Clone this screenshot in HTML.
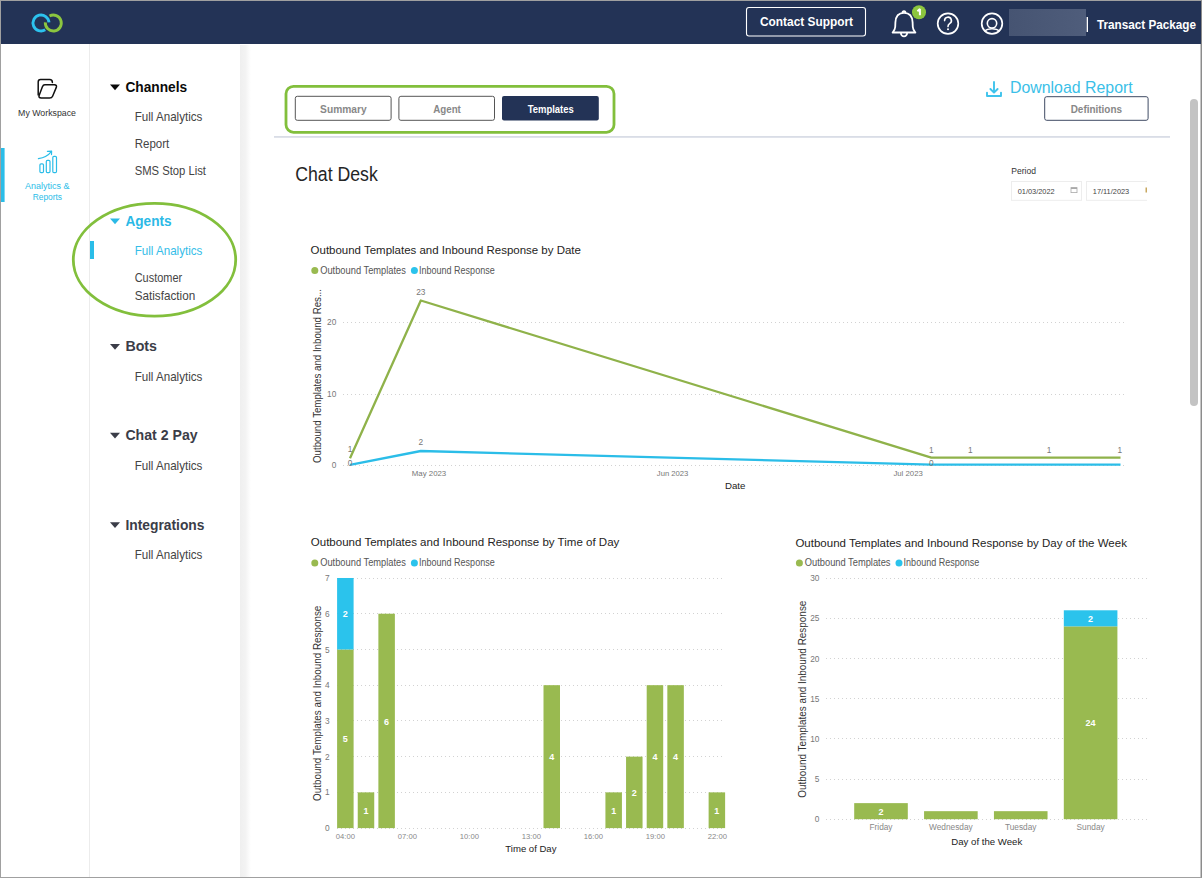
<!DOCTYPE html>
<html><head><meta charset="utf-8"><title>Chat Desk</title>
<style>
*{margin:0;padding:0}
html,body{width:1202px;height:878px;overflow:hidden;background:#fff}
body{position:relative;font-family:"Liberation Sans", sans-serif}
svg{position:absolute;left:0;top:0;display:block}
text{font-family:"Liberation Sans", sans-serif}
#frame{position:absolute;left:0;top:0;width:1202px;height:878px;box-sizing:border-box;border-left:1px solid #a0a0a0;border-top:1px solid #a0a0a0;border-bottom:1px solid #a0a0a0;border-right:1px solid #8c8c8c}
#frame2{position:absolute;left:1200px;top:44px;width:1px;height:834px;background:#c6c6c6}
</style></head>
<body>
<svg width="1202" height="878" viewBox="0 0 1202 878">
<rect x="0" y="0" width="1202" height="44" fill="#233356"/>
<path d="M48.98 22.44 A8.0 8.0 0 1 0 45.24 29.78" fill="none" stroke="#2cc2ee" stroke-width="2.9"/>
<path d="M45.32 22.44 A8.0 8.0 0 1 0 49.54 15.94" fill="none" stroke="#8cc63f" stroke-width="2.9"/>
<rect x="746.5" y="7.5" width="119" height="28.5" rx="2.5" fill="none" stroke="#fff" stroke-width="1.1"/>
<text x="760" y="26.3" font-size="13.6" fill="#fff" font-weight="bold" textLength="93" lengthAdjust="spacingAndGlyphs" >Contact Support</text>
<g fill="none" stroke="#fff" stroke-width="1.8" stroke-linejoin="round"><path d="M904 12.8 C898.2 12.8 895.6 17 895.4 22.4 L895.2 27 C895 29.8 893.4 31.4 892.6 32.5 L915.4 32.5 C914.6 31.4 913 29.8 912.8 27 L912.6 22.4 C912.4 17 909.8 12.8 904 12.8 Z"/><path d="M900.9 32.9 A3.1 3.4 0 0 0 907.1 32.9"/><path d="M902.5 12.9 C902.5 10.4 905.5 10.4 905.5 12.9"/></g>
<circle cx="919" cy="12.2" r="7" fill="#8cc63f"/>
<path d="M917.4 11.2 L919.9 9.1 L919.9 15.3" fill="none" stroke="#fff" stroke-width="2" stroke-linejoin="bevel"/>
<circle cx="948" cy="23.6" r="10.3" fill="none" stroke="#fff" stroke-width="1.7"/>
<path d="M944.6 20.6 A3.4 3.4 0 1 1 949.6 23.6 C948.4 24.3 948 25 948 26.6" fill="none" stroke="#fff" stroke-width="1.6" stroke-linecap="round"/>
<circle cx="948" cy="29.2" r="1" fill="#fff"/>
<circle cx="992" cy="23.6" r="10.3" fill="none" stroke="#fff" stroke-width="1.7"/>
<circle cx="992" cy="23.3" r="4.7" fill="none" stroke="#fff" stroke-width="1.6"/>
<path d="M984.2 31.2 C986.4 29.4 989 28.8 992 28.8 C995 28.8 997.6 29.4 999.8 31.2" fill="none" stroke="#fff" stroke-width="1.6"/>
<defs><linearGradient id="rg" x1="0" y1="0" x2="1" y2="0"><stop offset="0" stop-color="#465472"/><stop offset="1" stop-color="#4f5d7b"/></linearGradient></defs>
<rect x="1009" y="9" width="77" height="27" fill="url(#rg)"/>
<rect x="1086.6" y="17" width="1.4" height="15" fill="#fff"/>
<text x="1097" y="28.9" font-size="13.2" fill="#fff" font-weight="bold" textLength="99" lengthAdjust="spacingAndGlyphs" >Transact Package</text>
<rect x="89" y="44" width="1" height="834" fill="#ececec"/>
<g fill="none" stroke="#111" stroke-width="1.5" stroke-linejoin="round" stroke-linecap="round"><path d="M38.2 95 L38.2 82 Q38.2 79.6 40.6 79.6 L49.6 79.6 Q52.4 79.6 52.4 82.4"/><path d="M44.8 84.8 L54.4 84.8 Q57.2 84.8 56.3 87.4 L52.6 96.2 Q51.8 98 49.6 98 L41.2 98 Q38.2 98 39.2 95.2 L42.4 86.8 Q43.2 84.8 44.8 84.8 Z"/></g>
<text x="18.1" y="115.9" font-size="9.6" fill="#333" textLength="57.9" lengthAdjust="spacingAndGlyphs" >My Workspace</text>
<rect x="1" y="148" width="3.6" height="54" fill="#2bbde8"/>
<g fill="none" stroke="#2bbde8" stroke-width="1.2" stroke-linejoin="round"><rect x="39.9" y="163.9" width="3.6" height="8.8" rx="1.2"/><rect x="46.3" y="160.3" width="3.7" height="12.4" rx="1.2"/><rect x="52.8" y="156.4" width="3.7" height="16.3" rx="1.2"/><path d="M38.4 158.6 C43 158 48 156 51.5 151.4" stroke-linecap="round"/><path d="M47.4 151.3 L51.6 151.2 L51.5 154.6" stroke-linecap="round"/></g>
<text x="25" y="189.1" font-size="9.6" fill="#2bbde8" textLength="44.4" lengthAdjust="spacingAndGlyphs" >Analytics &amp;</text>
<text x="32.7" y="200" font-size="9.6" fill="#2bbde8" textLength="29.3" lengthAdjust="spacingAndGlyphs" >Reports</text>
<defs><linearGradient id="sh" x1="0" y1="0" x2="1" y2="0"><stop offset="0" stop-color="#efefef"/><stop offset="0.5" stop-color="#f3f3f3"/><stop offset="1" stop-color="#ffffff"/></linearGradient></defs>
<rect x="240" y="45" width="11" height="833" fill="url(#sh)"/>
<path d="M110 84.4 L120 84.4 L115 90.2 Z" fill="#0a0a0a"/>
<text x="125.4" y="91.8" font-size="14.9" fill="#0a0a0a" font-weight="bold" textLength="61.8" lengthAdjust="spacingAndGlyphs" >Channels</text>
<text x="134.7" y="120.8" font-size="12.4" fill="#444" textLength="67.7" lengthAdjust="spacingAndGlyphs" >Full Analytics</text>
<text x="134.7" y="147.7" font-size="12.4" fill="#444" textLength="34.6" lengthAdjust="spacingAndGlyphs" >Report</text>
<text x="134.7" y="174.6" font-size="12.4" fill="#444" textLength="71.3" lengthAdjust="spacingAndGlyphs" >SMS Stop List</text>
<path d="M110 218.4 L120 218.4 L115 224.2 Z" fill="#2bb9e6"/>
<text x="125.4" y="225.8" font-size="14.9" fill="#2bb9e6" font-weight="bold" textLength="46.2" lengthAdjust="spacingAndGlyphs" >Agents</text>
<rect x="90" y="241" width="4" height="18" fill="#2bbde8"/>
<text x="134.7" y="255" font-size="12.4" fill="#35bde8" textLength="67.7" lengthAdjust="spacingAndGlyphs" >Full Analytics</text>
<text x="134.7" y="282" font-size="12.4" fill="#444" textLength="47.5" lengthAdjust="spacingAndGlyphs" >Customer</text>
<text x="134.7" y="299.6" font-size="12.4" fill="#444" textLength="60.5" lengthAdjust="spacingAndGlyphs" >Satisfaction</text>
<path d="M110 343.9 L120 343.9 L115 349.7 Z" fill="#3b3d48"/>
<text x="125.4" y="351.3" font-size="14.9" fill="#3b3d48" font-weight="bold" textLength="31.6" lengthAdjust="spacingAndGlyphs" >Bots</text>
<text x="134.7" y="380.6" font-size="12.4" fill="#444" textLength="67.7" lengthAdjust="spacingAndGlyphs" >Full Analytics</text>
<path d="M110 432.8 L120 432.8 L115 438.6 Z" fill="#3b3d48"/>
<text x="125.4" y="440.2" font-size="14.9" fill="#3b3d48" font-weight="bold" textLength="72.2" lengthAdjust="spacingAndGlyphs" >Chat 2 Pay</text>
<text x="134.7" y="469.5" font-size="12.4" fill="#444" textLength="67.7" lengthAdjust="spacingAndGlyphs" >Full Analytics</text>
<path d="M110 522.2 L120 522.2 L115 528.0 Z" fill="#3b3d48"/>
<text x="125.4" y="529.6" font-size="14.9" fill="#3b3d48" font-weight="bold" textLength="79.1" lengthAdjust="spacingAndGlyphs" >Integrations</text>
<text x="134.7" y="559.2" font-size="12.4" fill="#444" textLength="67.7" lengthAdjust="spacingAndGlyphs" >Full Analytics</text>
<ellipse cx="154.5" cy="259.8" rx="81.2" ry="56.4" fill="none" stroke="#82bf3c" stroke-width="2.8"/>
<rect x="286" y="86.3" width="328" height="46" rx="7.5" fill="none" stroke="#82bf3c" stroke-width="2.8"/>
<rect x="295.3" y="96.3" width="95.8" height="24" rx="2" fill="#fff" stroke="#555" stroke-width="1"/>
<rect x="398.9" y="96.3" width="95.6" height="24" rx="2" fill="#fff" stroke="#555" stroke-width="1"/>
<rect x="502" y="96" width="96.8" height="24.6" rx="2" fill="#233356"/>
<text x="320.1" y="113.2" font-size="11.4" fill="#888" font-weight="bold" textLength="46.6" lengthAdjust="spacingAndGlyphs" >Summary</text>
<text x="433.2" y="113.2" font-size="11.4" fill="#888" font-weight="bold" textLength="27.7" lengthAdjust="spacingAndGlyphs" >Agent</text>
<text x="527.7" y="112.8" font-size="11.4" fill="#fff" font-weight="bold" textLength="46.1" lengthAdjust="spacingAndGlyphs" >Templates</text>
<rect x="274" y="136" width="896" height="1.8" fill="#d9dde6"/>
<g fill="none" stroke="#3ec3ec" stroke-width="1.9" stroke-linecap="round" stroke-linejoin="round"><path d="M994 82 L994 92"/><path d="M990.4 89 L994 92.6 L997.6 89"/><path d="M987 92.6 L987 96 L1001 96 L1001 92.6"/></g>
<text x="1010" y="92.8" font-size="16.1" fill="#3bbfe8" textLength="122.7" lengthAdjust="spacingAndGlyphs" >Download Report</text>
<rect x="1044.7" y="96.7" width="103.4" height="23.6" rx="2" fill="#fff" stroke="#3f4a63" stroke-width="1"/>
<text x="1070.7" y="113.4" font-size="11" fill="#888" font-weight="bold" textLength="51.3" lengthAdjust="spacingAndGlyphs" >Definitions</text>
<text x="295.2" y="180.6" font-size="19.3" fill="#252525" textLength="82.6" lengthAdjust="spacingAndGlyphs" >Chat Desk</text>
<text x="1011.3" y="174" font-size="9.5" fill="#333" textLength="24.7" lengthAdjust="spacingAndGlyphs" >Period</text>
<rect x="1011.5" y="181.5" width="70" height="18.8" fill="#fff" stroke="#ededed" stroke-width="1"/>
<rect x="1086.5" y="181.5" width="70" height="18.8" fill="#fff" stroke="#ededed" stroke-width="1"/>
<rect x="1147" y="176" width="20" height="30" fill="#fff"/>
<text x="1017.7" y="194" font-size="8" fill="#444" textLength="36.9" lengthAdjust="spacingAndGlyphs" >01/03/2022</text>
<text x="1092.8" y="194" font-size="8" fill="#444" textLength="36.4" lengthAdjust="spacingAndGlyphs" >17/11/2023</text>
<rect x="1071" y="187.6" width="6" height="5" fill="none" stroke="#a9a9a9" stroke-width="0.8"/><rect x="1071" y="187.6" width="6" height="1.4" fill="#a9a9a9"/>
<rect x="1145.5" y="187.5" width="1.5" height="5" fill="#c8a860"/>
<rect x="1190" y="99" width="8" height="307" rx="4" fill="#c3c3c3"/>
<text x="310.6" y="254" font-size="11.6" fill="#252423" textLength="270.3" lengthAdjust="spacingAndGlyphs" >Outbound Templates and Inbound Response by Date</text>
<circle cx="314.8" cy="270.5" r="3.5" fill="#99ba50"/>
<text x="320.2" y="274" font-size="10" fill="#555" textLength="85.7" lengthAdjust="spacingAndGlyphs" >Outbound Templates</text>
<circle cx="414.4" cy="270.5" r="3.5" fill="#2bc3ec"/>
<text x="419" y="274" font-size="10" fill="#555" textLength="75.7" lengthAdjust="spacingAndGlyphs" >Inbound Response</text>
<text transform="translate(321 463) rotate(-90)" x="0" y="0" font-size="10" fill="#333" textLength="174" lengthAdjust="spacingAndGlyphs">Outbound Templates and Inbound Res...</text>
<line x1="343" y1="322.5" x2="1127" y2="322.5" stroke="#d2d2d2" stroke-width="1" stroke-dasharray="1 3"/>
<text x="336.3" y="325" font-size="8.3" fill="#777" text-anchor="end" >20</text>
<line x1="343" y1="394.5" x2="1127" y2="394.5" stroke="#d2d2d2" stroke-width="1" stroke-dasharray="1 3"/>
<text x="336.3" y="397" font-size="8.3" fill="#777" text-anchor="end" >10</text>
<line x1="343" y1="465.5" x2="1127" y2="465.5" stroke="#d2d2d2" stroke-width="1" stroke-dasharray="1 3"/>
<text x="336.3" y="468.3" font-size="8.3" fill="#777" text-anchor="end" >0</text>
<polyline points="350,458.3 420.8,300.5 931.3,457.6 970.4,457.6 1049,457.6 1120.5,457.6" fill="none" stroke="#8fb24a" stroke-width="2.3" stroke-linejoin="round"/>
<polyline points="350,464.8 420.8,451 931.3,464.6 970.4,464.6 1049,464.6 1120.5,464.6" fill="none" stroke="#2bbde8" stroke-width="2.3" stroke-linejoin="round"/>
<text x="420.8" y="294.6" font-size="8.3" fill="#777" text-anchor="middle" >23</text>
<text x="420.8" y="445.3" font-size="8.3" fill="#777" text-anchor="middle" >2</text>
<text x="350" y="452" font-size="8.3" fill="#777" text-anchor="middle" >1</text>
<text x="350" y="466" font-size="8.3" fill="#777" text-anchor="middle" >0</text>
<text x="931.3" y="452.5" font-size="8.3" fill="#777" text-anchor="middle" >1</text>
<text x="970.4" y="452.5" font-size="8.3" fill="#777" text-anchor="middle" >1</text>
<text x="1049" y="452.5" font-size="8.3" fill="#777" text-anchor="middle" >1</text>
<text x="1119.7" y="452.5" font-size="8.3" fill="#777" text-anchor="middle" >1</text>
<text x="931.3" y="466" font-size="8.3" fill="#777" text-anchor="middle" >0</text>
<text x="429" y="476" font-size="8" fill="#777" text-anchor="middle" textLength="34.5" lengthAdjust="spacingAndGlyphs" >May 2023</text>
<text x="672.6" y="475.5" font-size="8" fill="#777" text-anchor="middle" textLength="31.6" lengthAdjust="spacingAndGlyphs" >Jun 2023</text>
<text x="908.1" y="476" font-size="8" fill="#777" text-anchor="middle" textLength="29.4" lengthAdjust="spacingAndGlyphs" >Jul 2023</text>
<text x="735.2" y="489" font-size="9.9" fill="#222" text-anchor="middle" textLength="20.5" lengthAdjust="spacingAndGlyphs" >Date</text>
<text x="310.8" y="546.2" font-size="11.6" fill="#252423" textLength="308.5" lengthAdjust="spacingAndGlyphs" >Outbound Templates and Inbound Response by Time of Day</text>
<circle cx="314.8" cy="562.9" r="3.5" fill="#99ba50"/>
<text x="320.2" y="566.4" font-size="10" fill="#555" textLength="85.7" lengthAdjust="spacingAndGlyphs" >Outbound Templates</text>
<circle cx="414.4" cy="562.9" r="3.5" fill="#2bc3ec"/>
<text x="419" y="566.4" font-size="10" fill="#555" textLength="75.7" lengthAdjust="spacingAndGlyphs" >Inbound Response</text>
<text transform="translate(320.6 800.9) rotate(-90)" x="0" y="0" font-size="10" fill="#333" textLength="195.2" lengthAdjust="spacingAndGlyphs">Outbound Templates and Inbound Response</text>
<line x1="337" y1="828.5" x2="725" y2="828.5" stroke="#d2d2d2" stroke-width="1" stroke-dasharray="1 3"/>
<text x="329.6" y="831.1" font-size="8.3" fill="#777" text-anchor="end" >0</text>
<line x1="337" y1="792.5" x2="725" y2="792.5" stroke="#d2d2d2" stroke-width="1" stroke-dasharray="1 3"/>
<text x="329.6" y="795.4" font-size="8.3" fill="#777" text-anchor="end" >1</text>
<line x1="337" y1="756.5" x2="725" y2="756.5" stroke="#d2d2d2" stroke-width="1" stroke-dasharray="1 3"/>
<text x="329.6" y="759.6" font-size="8.3" fill="#777" text-anchor="end" >2</text>
<line x1="337" y1="720.5" x2="725" y2="720.5" stroke="#d2d2d2" stroke-width="1" stroke-dasharray="1 3"/>
<text x="329.6" y="723.9" font-size="8.3" fill="#777" text-anchor="end" >3</text>
<line x1="337" y1="685.5" x2="725" y2="685.5" stroke="#d2d2d2" stroke-width="1" stroke-dasharray="1 3"/>
<text x="329.6" y="688.2" font-size="8.3" fill="#777" text-anchor="end" >4</text>
<line x1="337" y1="649.5" x2="725" y2="649.5" stroke="#d2d2d2" stroke-width="1" stroke-dasharray="1 3"/>
<text x="329.6" y="652.5" font-size="8.3" fill="#777" text-anchor="end" >5</text>
<line x1="337" y1="613.5" x2="725" y2="613.5" stroke="#d2d2d2" stroke-width="1" stroke-dasharray="1 3"/>
<text x="329.6" y="616.7" font-size="8.3" fill="#777" text-anchor="end" >6</text>
<line x1="337" y1="578.5" x2="725" y2="578.5" stroke="#d2d2d2" stroke-width="1" stroke-dasharray="1 3"/>
<text x="329.6" y="581.0" font-size="8.3" fill="#777" text-anchor="end" >7</text>
<rect x="337.10" y="649.45" width="16.5" height="178.65" fill="#99ba50"/>
<text x="345.35" y="742.4" font-size="9" fill="#fff" font-weight="bold" text-anchor="middle" >5</text>
<rect x="337.10" y="577.99" width="16.5" height="71.46" fill="#2bc3ec"/>
<text x="345.35" y="617.3" font-size="9" fill="#fff" font-weight="bold" text-anchor="middle" >2</text>
<rect x="357.74" y="792.37" width="16.5" height="35.73" fill="#99ba50"/>
<text x="365.99" y="813.8" font-size="9" fill="#fff" font-weight="bold" text-anchor="middle" >1</text>
<rect x="378.38" y="613.72" width="16.5" height="214.38" fill="#99ba50"/>
<text x="386.63" y="724.5" font-size="9" fill="#fff" font-weight="bold" text-anchor="middle" >6</text>
<rect x="543.50" y="685.18" width="16.5" height="142.92" fill="#99ba50"/>
<text x="551.75" y="760.2" font-size="9" fill="#fff" font-weight="bold" text-anchor="middle" >4</text>
<rect x="605.42" y="792.37" width="16.5" height="35.73" fill="#99ba50"/>
<text x="613.67" y="813.8" font-size="9" fill="#fff" font-weight="bold" text-anchor="middle" >1</text>
<rect x="626.06" y="756.64" width="16.5" height="71.46" fill="#99ba50"/>
<text x="634.31" y="796.0" font-size="9" fill="#fff" font-weight="bold" text-anchor="middle" >2</text>
<rect x="646.70" y="685.18" width="16.5" height="142.92" fill="#99ba50"/>
<text x="654.95" y="760.2" font-size="9" fill="#fff" font-weight="bold" text-anchor="middle" >4</text>
<rect x="667.34" y="685.18" width="16.5" height="142.92" fill="#99ba50"/>
<text x="675.59" y="760.2" font-size="9" fill="#fff" font-weight="bold" text-anchor="middle" >4</text>
<rect x="708.62" y="792.37" width="16.5" height="35.73" fill="#99ba50"/>
<text x="716.87" y="813.8" font-size="9" fill="#fff" font-weight="bold" text-anchor="middle" >1</text>
<text x="345.35" y="838.7" font-size="7.9" fill="#888" text-anchor="middle" textLength="19.1" lengthAdjust="spacingAndGlyphs" >04:00</text>
<text x="407.35" y="838.7" font-size="7.9" fill="#888" text-anchor="middle" textLength="19.1" lengthAdjust="spacingAndGlyphs" >07:00</text>
<text x="469.35" y="838.7" font-size="7.9" fill="#888" text-anchor="middle" textLength="19.1" lengthAdjust="spacingAndGlyphs" >10:00</text>
<text x="531.35" y="838.7" font-size="7.9" fill="#888" text-anchor="middle" textLength="19.1" lengthAdjust="spacingAndGlyphs" >13:00</text>
<text x="593.35" y="838.7" font-size="7.9" fill="#888" text-anchor="middle" textLength="19.1" lengthAdjust="spacingAndGlyphs" >16:00</text>
<text x="655.35" y="838.7" font-size="7.9" fill="#888" text-anchor="middle" textLength="19.1" lengthAdjust="spacingAndGlyphs" >19:00</text>
<text x="717.35" y="838.7" font-size="7.9" fill="#888" text-anchor="middle" textLength="19.1" lengthAdjust="spacingAndGlyphs" >22:00</text>
<text x="530.9" y="851.8" font-size="9.9" fill="#222" text-anchor="middle" textLength="51.1" lengthAdjust="spacingAndGlyphs" >Time of Day</text>
<text x="795.4" y="546.5" font-size="11.6" fill="#252423" textLength="331.5" lengthAdjust="spacingAndGlyphs" >Outbound Templates and Inbound Response by Day of the Week</text>
<circle cx="799.4" cy="562.9" r="3.5" fill="#99ba50"/>
<text x="804.8000000000001" y="566.4" font-size="10" fill="#555" textLength="85.7" lengthAdjust="spacingAndGlyphs" >Outbound Templates</text>
<circle cx="899.0" cy="562.9" r="3.5" fill="#2bc3ec"/>
<text x="903.6" y="566.4" font-size="10" fill="#555" textLength="75.7" lengthAdjust="spacingAndGlyphs" >Inbound Response</text>
<text transform="translate(805.6 797.7) rotate(-90)" x="0" y="0" font-size="10" fill="#333" textLength="197.1" lengthAdjust="spacingAndGlyphs">Outbound Templates and Inbound Response</text>
<line x1="826" y1="819.5" x2="1147" y2="819.5" stroke="#d2d2d2" stroke-width="1" stroke-dasharray="1 3"/>
<text x="819.4" y="822.2" font-size="8.3" fill="#777" text-anchor="end" >0</text>
<line x1="826" y1="779.5" x2="1147" y2="779.5" stroke="#d2d2d2" stroke-width="1" stroke-dasharray="1 3"/>
<text x="819.4" y="782.0" font-size="8.3" fill="#777" text-anchor="end" >5</text>
<line x1="826" y1="738.5" x2="1147" y2="738.5" stroke="#d2d2d2" stroke-width="1" stroke-dasharray="1 3"/>
<text x="819.4" y="741.9" font-size="8.3" fill="#777" text-anchor="end" >10</text>
<line x1="826" y1="698.5" x2="1147" y2="698.5" stroke="#d2d2d2" stroke-width="1" stroke-dasharray="1 3"/>
<text x="819.4" y="701.7" font-size="8.3" fill="#777" text-anchor="end" >15</text>
<line x1="826" y1="658.5" x2="1147" y2="658.5" stroke="#d2d2d2" stroke-width="1" stroke-dasharray="1 3"/>
<text x="819.4" y="661.5" font-size="8.3" fill="#777" text-anchor="end" >20</text>
<line x1="826" y1="618.5" x2="1147" y2="618.5" stroke="#d2d2d2" stroke-width="1" stroke-dasharray="1 3"/>
<text x="819.4" y="621.3" font-size="8.3" fill="#777" text-anchor="end" >25</text>
<line x1="826" y1="578.5" x2="1147" y2="578.5" stroke="#d2d2d2" stroke-width="1" stroke-dasharray="1 3"/>
<text x="819.4" y="581.2" font-size="8.3" fill="#777" text-anchor="end" >30</text>
<rect x="854.20" y="803.13" width="53.6" height="16.07" fill="#99ba50"/>
<text x="881.0" y="814.6" font-size="9" fill="#fff" font-weight="bold" text-anchor="middle" >2</text>
<text x="881.0" y="830" font-size="8.3" fill="#888" text-anchor="middle" >Friday</text>
<rect x="924.07" y="811.17" width="53.6" height="8.04" fill="#99ba50"/>
<text x="950.87" y="830" font-size="8.3" fill="#888" text-anchor="middle" >Wednesday</text>
<rect x="993.94" y="811.17" width="53.6" height="8.04" fill="#99ba50"/>
<text x="1020.74" y="830" font-size="8.3" fill="#888" text-anchor="middle" >Tuesday</text>
<rect x="1063.81" y="626.36" width="53.6" height="192.84" fill="#99ba50"/>
<text x="1090.61" y="726.2" font-size="9" fill="#fff" font-weight="bold" text-anchor="middle" >24</text>
<rect x="1063.81" y="610.29" width="53.6" height="16.07" fill="#2bc3ec"/>
<text x="1090.61" y="621.7" font-size="9" fill="#fff" font-weight="bold" text-anchor="middle" >2</text>
<text x="1090.61" y="830" font-size="8.3" fill="#888" text-anchor="middle" >Sunday</text>
<text x="986.8" y="844.5" font-size="9.9" fill="#222" text-anchor="middle" textLength="71" lengthAdjust="spacingAndGlyphs" >Day of the Week</text>
</svg>
<div id="frame2"></div><div id="frame"></div>
</body></html>
